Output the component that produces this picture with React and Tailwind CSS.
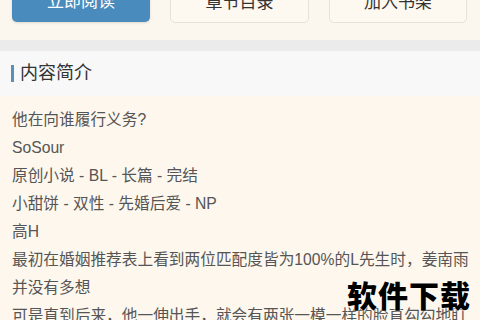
import React from "react";

const lines = [
  "他在向谁履行义务?",
  "SoSour",
  "原创小说 - BL - 长篇 - 完结",
  "小甜饼 - 双性 - 先婚后爱 - NP",
  "高H",
  "最初在婚姻推荐表上看到两位匹配度皆为100%的L先生时，姜南雨并没有多想",
  "可是直到后来，他一伸出手，就会有两张一模一样的脸直勾勾地盯着他看。",
];

function App() {
  return (
    <div
      className="relative w-[480px] h-[320px] overflow-hidden bg-[#fdf7ee]"
      style={{ fontFamily: '"Liberation Sans", "Noto Sans CJK SC", sans-serif' }}
    >
      {/* 按钮区 */}
      <div className="flex gap-[20px] px-[12px] h-[40px] bg-[#fcf7ee]">
        <button className="mt-[-18px] w-[138px] h-[40px] rounded-[5px] bg-[#4a8bbd] text-white text-[17px] shadow-sm">
          立即阅读
        </button>
        <button className="mt-[-18px] w-[139px] h-[41px] rounded-[5px] bg-[#fdf8f0] border border-[#e6e1d9] text-[#333] text-[17px]">
          章节目录
        </button>
        <button className="mt-[-18px] w-[138px] h-[41px] rounded-[5px] bg-[#fdf8f0] border border-[#e6e1d9] text-[#333] text-[17px]">
          加入书架
        </button>
      </div>

      <div className="h-[11px] bg-[#ebebeb]" />

      {/* 标题 */}
      <div className="flex items-center h-[45px] bg-[#f8f8f8] pl-[11px]">
        <span className="w-[3px] h-[17px] bg-[#5b8fb5] mr-[6px]" />
        <span className="text-[18px] text-[#333]">内容简介</span>
      </div>

      {/* 简介内容 */}
      <div className="pt-[10px] pl-[12px] pr-[6px] text-[15.7px] leading-[28px] text-[#555]">
        {lines.map((line, i) => (
          <p key={i}>{line}</p>
        ))}
      </div>

      {/* 水印 */}
      <div
        className="absolute left-[347px] top-[272px] text-[30px] font-black text-black tracking-[1px]"
        style={{ fontFamily: '"Noto Sans CJK SC", sans-serif', textShadow: "0 0 2px #fff, 0 0 2px #fff" }}
      >
        软件下载
      </div>
    </div>
  );
}

export default App;
